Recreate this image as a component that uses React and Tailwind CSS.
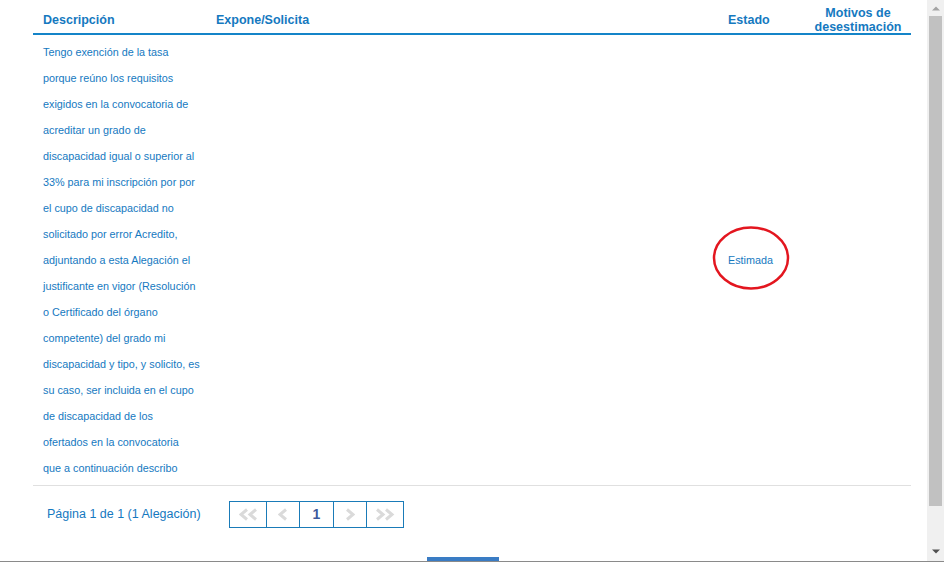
const lines = [
  'Tengo exención de la tasa',
  'porque reúno los requisitos',
  'exigidos en la convocatoria de',
  'acreditar un grado de',
  'discapacidad igual o superior al',
  '33% para mi inscripción por por',
  'el cupo de discapacidad no',
  'solicitado por error Acredito,',
  'adjuntando a esta Alegación el',
  'justificante en vigor (Resolución',
  'o Certificado del órgano',
  'competente) del grado mi',
  'discapacidad y tipo, y solicito, es',
  'su caso, ser incluida en el cupo',
  'de discapacidad de los',
  'ofertados en la convocatoria',
  'que a continuación describo',
];

function Chevron({ double, right }) {
  const pts = right
    ? ['1,1.5 7,6.5 1,11.5', '10,1.5 16,6.5 10,11.5']
    : ['8,1.5 2,6.5 8,11.5', '17,1.5 11,6.5 17,11.5'];
  return (
    <svg width={double ? 19 : 10} height="13" viewBox={double ? '0 0 19 13' : '0 0 10 13'}>
      {(double ? pts : [right ? '2,1.5 8,6.5 2,11.5' : '8,1.5 2,6.5 8,11.5']).map((p) => (
        <polyline key={p} points={p} fill="none" stroke="#dadada" strokeWidth="3" />
      ))}
    </svg>
  );
}

export default function App() {
  return (
    <div className="flex h-[562px] w-[944px] flex-col overflow-hidden bg-white font-['Liberation_Sans',Arial,sans-serif] text-[#1579bf]">
      <div className="flex h-[561px]">
        <div className="flex flex-1 flex-col">
          <div className="ml-[33px] mr-[16px]">
            {/* header */}
            <div className="grid h-[35px] grid-cols-[173px_512px_87px_106px] items-center border-b-2 border-[#1484c8] pt-[6px] text-[12.5px] font-bold leading-[14px]">
              <div className="pl-[10px]">Descripción</div>
              <div className="pl-[10px]">Expone/Solicita</div>
              <div className="pl-[10px]">Estado</div>
              <div className="text-center">
                Motivos de
                <br />
                desestimación
              </div>
            </div>

            {/* row */}
            <div className="grid grid-cols-[173px_512px_87px_106px] border-b border-[#e0e0e0] pb-[4px] pt-[4px] text-[10.8px] leading-[26px]">
              <div className="pl-[10px]">
                {lines.map((l) => (
                  <div key={l} className="whitespace-nowrap">{l}</div>
                ))}
              </div>
              <div />
              <div className="self-center pl-[10px]">
                <span className="relative inline-block">
                  Estimada
                  <svg
                    className="absolute left-1/2 top-[calc(50%-2px)] h-[66px] w-[80px] -translate-x-1/2 -translate-y-1/2"
                    viewBox="0 0 80 66"
                  >
                    <ellipse cx="40" cy="33" rx="37" ry="30.5" fill="none" stroke="#e3161f" strokeWidth="2.5" />
                  </svg>
                </span>
              </div>
              <div />
            </div>

            {/* pagination */}
            <div className="flex items-center pt-[15px]">
              <div className="w-[196px] pl-[14px] text-[12.5px]">Página 1 de 1 (1 Alegación)</div>
              <div className="flex h-[27px] border border-[#1a7bb8]">
                <div className="flex w-[37px] items-center justify-center border-r border-[#1a7bb8]">
                  <Chevron double />
                </div>
                <div className="flex w-[33px] items-center justify-center border-r border-[#1a7bb8]">
                  <Chevron />
                </div>
                <div className="flex w-[34px] items-center justify-center border-r border-[#1a7bb8] text-[14px] font-bold text-[#3f5a9c]">
                  1
                </div>
                <div className="flex w-[33px] items-center justify-center border-r border-[#1a7bb8]">
                  <Chevron right />
                </div>
                <div className="flex w-[36px] items-center justify-center">
                  <Chevron double right />
                </div>
              </div>
            </div>
          </div>
          <div className="flex-1" />
          <div className="ml-[427px] h-[4px] w-[72px] bg-[#3a7cc4]" />
        </div>

        {/* scrollbar */}
        <div className="flex w-[17px] flex-col bg-[#f0f0f0]">
          <div className="flex h-[16px] items-center justify-center">
            <svg width="8" height="5" viewBox="0 0 8 5">
              <polygon points="0,4.5 4,0.5 8,4.5" fill="#a3a3a3" />
            </svg>
          </div>
          <div className="mx-[2px] h-[490px] bg-[#c1c1c1]" />
          <div className="flex flex-1 items-end justify-center pb-[7px]">
            <svg width="8" height="5" viewBox="0 0 8 5">
              <polygon points="0,0.5 8,0.5 4,4.5" fill="#505050" />
            </svg>
          </div>
        </div>
      </div>
      <div className="h-px bg-[#8a8a8a]" />
    </div>
  );
}
